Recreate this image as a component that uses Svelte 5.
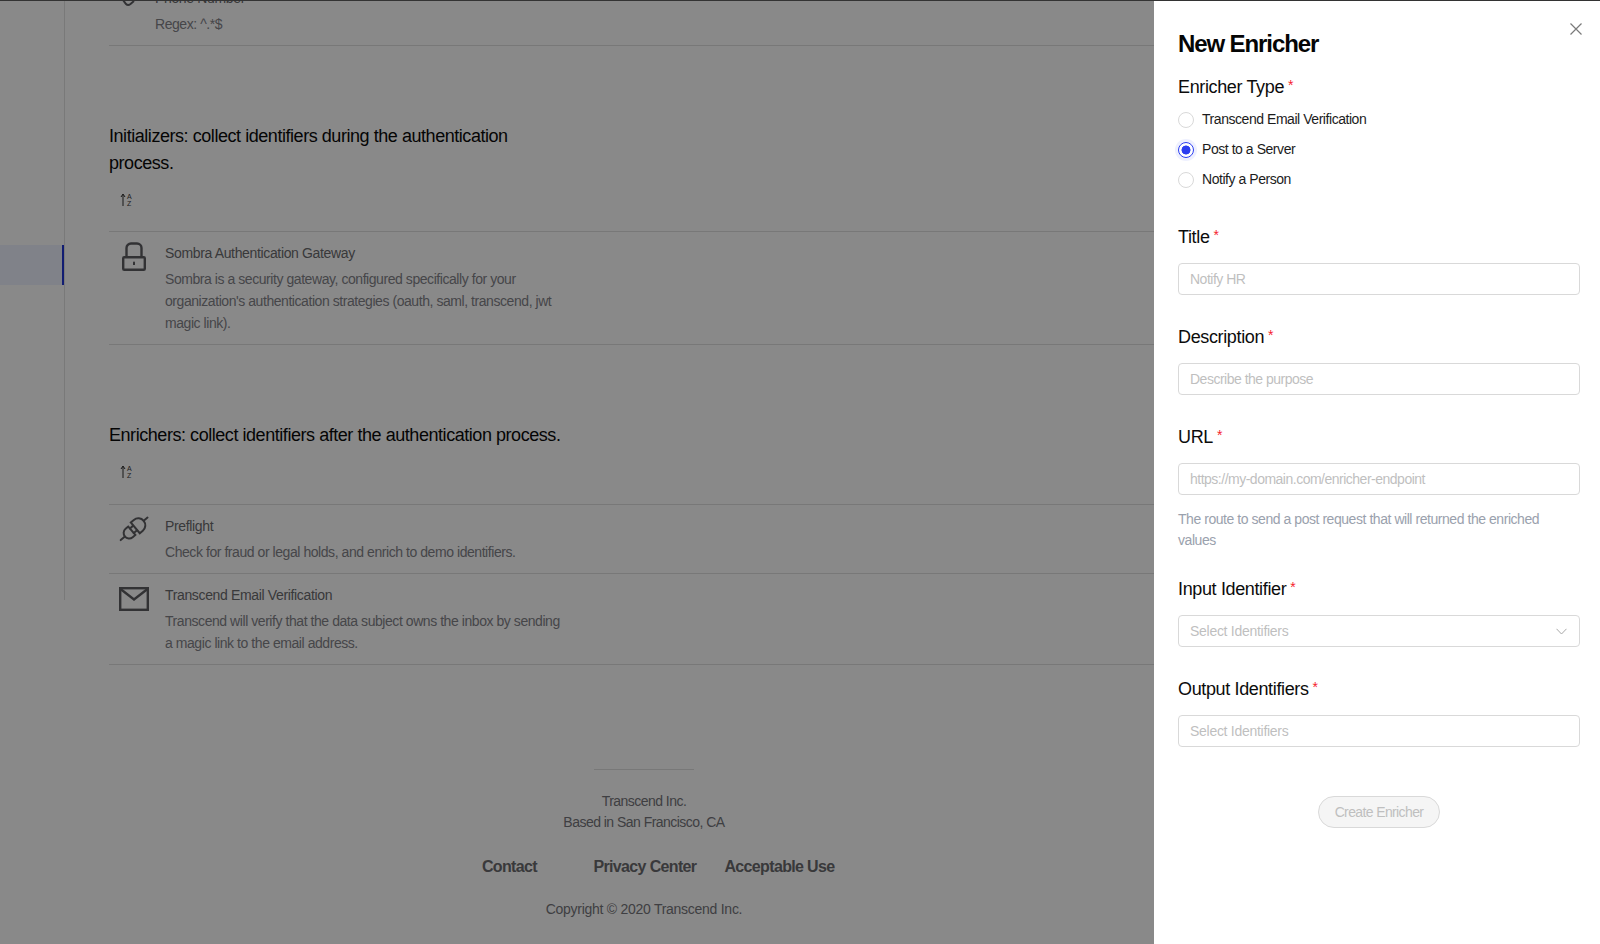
<script>
  const radios = [
    { label: 'Transcend Email Verification', on: false },
    { label: 'Post to a Server', on: true },
    { label: 'Notify a Person', on: false }
  ];
</script>

{#snippet sortIcon()}
  <div class="sort">
    <svg class="sort-arrow" width="6" height="13" viewBox="0 0 6 13" aria-hidden="true"><path d="M3 13V1.5M1 4l2-3 2 3" fill="none" stroke="#2e2e2e" stroke-width="1"/></svg>
    <span class="az"><span>A</span><span>Z</span></span>
  </div>
{/snippet}

<div class="page">
  <div class="sidebar">
    <div class="side-active"></div>
  </div>

  <main class="main">
    <div class="row first">
      <div class="ico">
        <svg width="30" height="30" viewBox="0 0 30 30" fill="none" stroke="#5c5c60" stroke-width="2" aria-hidden="true"><path d="M1 9l6 8q2 2 4.500 0L15 14"/></svg>
      </div>
      <div class="body">
        <div class="row-title">Phone Number</div>
        <div class="row-desc">Regex: ^.*$</div>
      </div>
    </div>

    <section class="sec">
      <h2>Initializers: collect identifiers during the authentication process.</h2>
      {@render sortIcon()}
      <div class="row">
        <div class="ico">
          <svg width="30" height="30" viewBox="0 0 30 30" fill="none" stroke="#5c5c60" stroke-width="2.4" aria-hidden="true">
            <rect x="4.2" y="15.2" width="21.6" height="12.6" rx="1"/>
            <path d="M7.5 15V6a4.500 4.500 0 0 1 4.500-4.500h6A4.500 4.500 0 0 1 22.500 6v9"/>
            <path d="M15 20.500v2.500" stroke-width="2"/>
            <circle cx="15" cy="20.500" r="1" fill="#5c5c60" stroke="none"/>
          </svg>
        </div>
        <div class="body">
          <div class="row-title">Sombra Authentication Gateway</div>
          <div class="row-desc">Sombra is a security gateway, configured specifically for your organization's authentication strategies (oauth, saml, transcend, jwt magic link).</div>
        </div>
      </div>
    </section>

    <section class="sec enrichers">
      <h2>Enrichers: collect identifiers after the authentication process.</h2>
      {@render sortIcon()}
      <div class="row">
        <div class="ico">
          <svg width="30" height="30" viewBox="0 0 30 30" fill="none" stroke="#5c5c60" stroke-width="2" stroke-linecap="round" aria-hidden="true">
            <g transform="translate(0 -1) rotate(-40 15.500 14.500)">
              <path d="M-2.500 14.500H3"/>
              <path d="M12 9H8.500a5.500 5.500 0 0 0 0 11H12z"/>
              <path d="M12 11.500h4M12 17.500h4"/>
              <path d="M16.500 7.500h4a7 7 0 0 1 0 14h-4z"/>
              <path d="M27.500 14.500h5"/>
            </g>
          </svg>
        </div>
        <div class="body">
          <div class="row-title">Preflight</div>
          <div class="row-desc">Check for fraud or legal holds, and enrich to demo identifiers.</div>
        </div>
      </div>
      <div class="row">
        <div class="ico">
          <svg width="30" height="30" viewBox="0 0 30 30" fill="none" stroke="#5c5c60" stroke-width="2.4" aria-hidden="true">
            <rect x="1.2" y="4.200" width="27.600" height="21.600"/>
            <path d="M1.500 5l13.500 10.500L28.500 5"/>
          </svg>
        </div>
        <div class="body">
          <div class="row-title">Transcend Email Verification</div>
          <div class="row-desc">Transcend will verify that the data subject owns the inbox by sending a magic link to the email address.</div>
        </div>
      </div>
    </section>

    <footer class="foot">
      <div class="foot-rule"></div>
      <p class="foot-addr">Transcend Inc.<br />Based in San Francisco, CA</p>
      <nav class="foot-links">
        <a href="#contact" class="contact">Contact</a>
        <a href="#privacy">Privacy Center</a>
        <a href="#use">Acceptable Use</a>
      </nav>
      <p class="foot-copy">Copyright © 2020 Transcend Inc.</p>
    </footer>
  </main>

  <div class="overlay"></div>

  <aside class="drawer">
    <button class="close" aria-label="Close">
      <svg width="12" height="12" viewBox="0 0 12 12" aria-hidden="true"><path d="M.5.5l11 11M11.500.5l-11 11" stroke="#7a7a7a" stroke-width="1.200" fill="none"/></svg>
    </button>
    <h1>New Enricher</h1>

    <div class="label">Enricher Type<span class="req">*</span></div>
    <div class="radios">
      {#each radios as r}
        <div class="radio-row">
          <span class="radio" class:on={r.on}></span>
          <span class="radio-text">{r.label}</span>
        </div>
      {/each}
    </div>

    <div class="item">
      <div class="label">Title<span class="req">*</span></div>
      <input class="field" placeholder="Notify HR" />
    </div>
    <div class="item">
      <div class="label">Description<span class="req">*</span></div>
      <input class="field" placeholder="Describe the purpose" />
    </div>
    <div class="item url">
      <div class="label">URL<span class="req">*</span></div>
      <input class="field" placeholder="https://my-domain.com/enricher-endpoint" />
      <p class="help">The route to send a post request that will returned the enriched values</p>
    </div>
    <div class="item">
      <div class="label">Input Identifier<span class="req">*</span></div>
      <div class="field select">
        <span>Select Identifiers</span>
        <svg width="11" height="7" viewBox="0 0 11 7" aria-hidden="true"><path d="M.5.8l5 5.200 5-5.200" fill="none" stroke="#a8a8a8" stroke-width="1"/></svg>
      </div>
    </div>
    <div class="item">
      <div class="label">Output Identifiers<span class="req">*</span></div>
      <div class="field select"><span>Select Identifiers</span></div>
    </div>
    <div class="actions">
      <button class="submit" disabled>Create Enricher</button>
    </div>
  </aside>

  <div class="topline"></div>
</div>

<style>
  :global(body) { margin: 0; background: #fff; }
  .page {
    position: relative;
    width: 1600px;
    height: 944px;
    overflow: hidden;
    display: flex;
    align-items: flex-start;
    background: #fafafa;
    font-family: "Liberation Sans", Arial, sans-serif;
    font-size: 14px;
    letter-spacing: -0.45px;
    color: #6e6e74;
  }
  .topline { position: absolute; left: 0; right: 0; top: 0; height: 1px; background: #333; }
  .sidebar {
    flex: none;
    box-sizing: border-box;
    width: 65px;
    height: 600px;
    padding-top: 245px;
    border-right: 1px solid #dcdcdc;
  }
  .side-active {
    height: 40px;
    background: #e9edf9;
    border-right: 2px solid #2235d0;
  }
  .main {
    flex: none;
    width: 1070px;
    margin-left: 44px;
    margin-top: -23px;
  }
  .row {
    display: flex;
    padding: 10px 0;
    border-bottom: 1px solid #dadada;
  }
  .ico { flex: none; width: 56px; padding-left: 10px; box-sizing: border-box; height: 30px; }
  .first .ico { width: 46px; }
  .ico svg { display: block; overflow: visible; }
  .body { max-width: 398px; }
  .row-title { line-height: 22px; color: #68686c; margin-bottom: 4px; letter-spacing: -0.35px; }
  .row-desc { line-height: 22px; color: #808086; letter-spacing: -0.44px; }
  .sec { margin-top: 77px; }
  .enrichers h2 { margin-bottom: 1px; }
  .enrichers .sort { padding-top: 15px; }
  h2 {
    margin: 0;
    max-width: 456px;
    font-size: 18px;
    font-weight: 400;
    line-height: 27px;
    letter-spacing: -0.45px;
    color: #0a0a0a;
  }
  .sort {
    box-sizing: border-box;
    height: 55px;
    padding: 16px 0 0 11px;
    display: flex;
    align-items: flex-start;
    gap: 1px;
    border-bottom: 1px solid #dadada;
  }
  .sort-arrow { display: block; }
  .az {
    display: flex;
    flex-direction: column;
    font-size: 7px;
    line-height: 7px;
    letter-spacing: 0;
    color: #3a3a3a;
  }
  .foot { text-align: center; margin-top: 104px; }
  .foot-rule { width: 100px; height: 1px; background: #dadada; margin: 0 auto; }
  .foot-addr { margin: 21px 0 0; line-height: 21px; color: #737378; letter-spacing: -0.53px; }
  .foot-links {
    display: flex;
    justify-content: center;
    gap: 28px;
    margin-top: 22px;
    line-height: 24px;
  }
  .foot-links a {
    font-size: 16px;
    font-weight: 700;
    letter-spacing: -0.65px;
    color: #68686c;
    text-decoration: none;
    white-space: nowrap;
  }
  .contact { width: 112px; }
  .foot-copy { margin: 19px 0 0; line-height: 22px; font-size: 14px; color: #737378; letter-spacing: -0.27px; }
  .overlay { position: absolute; inset: 0; background: rgba(0, 0, 0, 0.45); }
  .drawer {
    position: absolute;
    top: 0;
    right: 0;
    bottom: 0;
    width: 446px;
    box-sizing: border-box;
    padding: 25px 20px 0 24px;
    background: #fff;
    color: #111;
  }
  .close {
    position: absolute;
    top: 23px;
    right: 18px;
    padding: 0;
    border: 0;
    background: none;
    line-height: 0;
  }
  h1 {
    margin: 0 0 11px;
    font-size: 24px;
    font-weight: 700;
    line-height: 38px;
    letter-spacing: -1.1px;
    color: #050505;
  }
  .label {
    height: 26px;
    font-size: 18px;
    line-height: 26px;
    letter-spacing: -0.36px;
    color: #0c0c0c;
  }
  .req {
    color: #f5222d;
    font-size: 14px;
    margin-left: 4px;
    position: relative;
    top: -3px;
    letter-spacing: 0;
  }
  .radios { margin: 5px 0 29px; }
  .radio-row {
    display: flex;
    align-items: center;
    gap: 8px;
    height: 30px;
    color: #1c1c1c;
  }
  .radio-text { padding-bottom: 2px; }
  .radio {
    box-sizing: border-box;
    width: 16px;
    height: 16px;
    border: 1px solid #d9d9d9;
    border-radius: 50%;
    background: #fff;
  }
  .radio.on {
    border-color: #2b3df0;
    background: radial-gradient(circle, #2b3df0 0 4.2px, #fff 4.8px);
    box-shadow: 0 0 0 3px rgba(43, 61, 240, 0.08);
  }
  .item { margin-bottom: 29px; }
  .item .label { margin-bottom: 13px; }
  .url { margin-bottom: 25px; }
  .field {
    display: flex;
    align-items: center;
    justify-content: space-between;
    box-sizing: border-box;
    width: 100%;
    height: 32px;
    padding: 0 11px;
    border: 1px solid #d9d9d9;
    border-radius: 4px;
    background: #fff;
    font: inherit;
    letter-spacing: -0.5px;
    color: #bfbfbf;
    outline: none;
  }
  .field::placeholder { color: #bfbfbf; opacity: 1; }
  .select { letter-spacing: -0.28px; }
  .select svg { margin-right: 1px; }
  .help { margin: 14px 0 0; max-width: 385px; line-height: 21px; color: #9aa1ad; }
  .actions { display: flex; justify-content: center; padding-top: 20px; }
  .submit {
    width: 122px;
    height: 32px;
    padding: 0;
    border: 1px solid #d9d9d9;
    border-radius: 16px;
    background: #f5f5f5;
    font: inherit;
    letter-spacing: -0.62px;
    color: #bfbfbf;
  }
</style>
